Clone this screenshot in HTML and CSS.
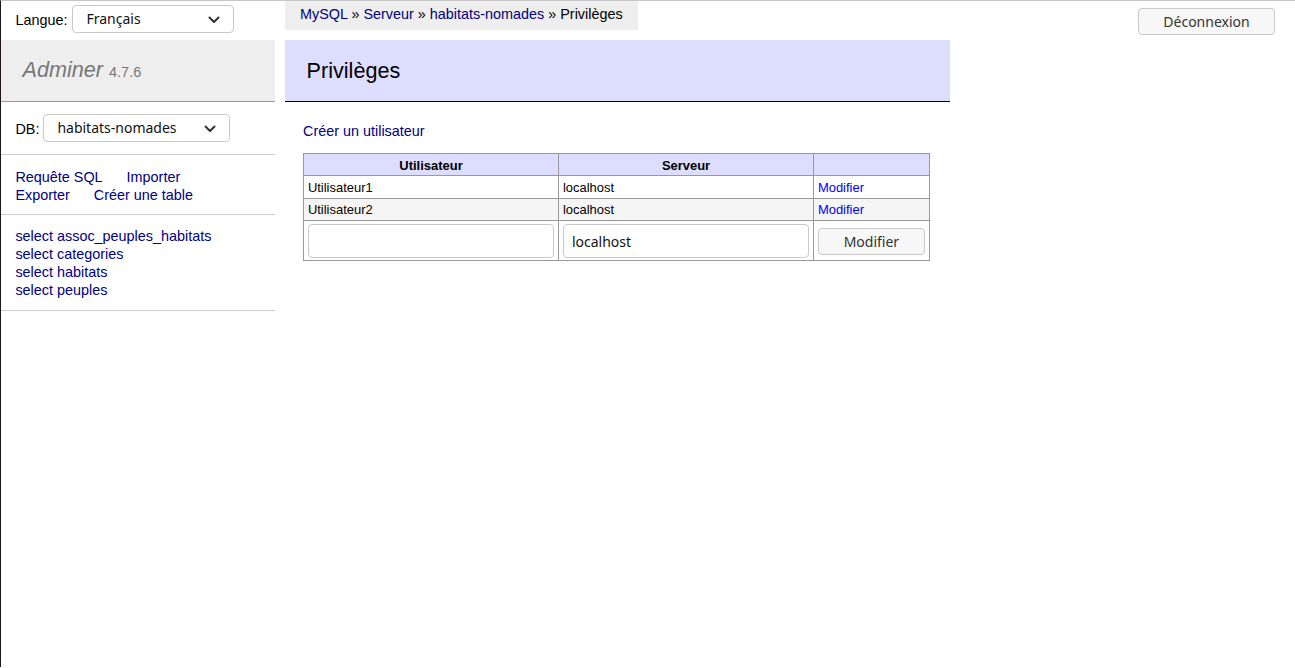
FILE: index.html
```html
<!DOCTYPE html>
<html lang="fr">
<head>
<meta charset="utf-8">
<title>Privilèges - Adminer</title>
<link rel="stylesheet" href="styles.css">
</head>
<body>
<div class="page">
  <div class="topbar">
    <div class="lang">
      <span class="label lang-label">Langue:</span>
      <span class="select lang-select">
        <span class="select-text">Français</span>
        <svg class="chev" width="12" height="8" viewBox="0 0 12 8"><path d="M1.5 1.5 L6 6 L10.5 1.5" fill="none" stroke="#333" stroke-width="2" stroke-linecap="round" stroke-linejoin="round"/></svg>
      </span>
    </div>
    <div class="breadcrumb">
      <a class="visited" href="#">MySQL</a> » <a class="visited" href="#">Serveur</a> » <a class="visited" href="#">habitats-nomades</a> » Privilèges
    </div>
    <button class="btn logout" type="button">Déconnexion</button>
  </div>
  <div class="main">
    <div class="menu">
      <h1><a class="h1link" href="#">Adminer</a> <span class="version">4.7.6</span></h1>
      <div class="dbrow">
        <span class="label">DB:</span>
        <span class="select db-select">
          <span class="select-text">habitats-nomades</span>
          <svg class="chev" width="12" height="8" viewBox="0 0 12 8"><path d="M1.5 1.5 L6 6 L10.5 1.5" fill="none" stroke="#333" stroke-width="2" stroke-linecap="round" stroke-linejoin="round"/></svg>
        </span>
      </div>
      <p class="links menu-links">
        <a class="visited" href="#">Requête SQL</a>
        <a class="visited" href="#">Importer</a>
        <a class="visited" href="#">Exporter</a>
        <a class="visited" href="#">Créer une table</a>
      </p>
      <ul class="tables">
        <li><a class="visited" href="#">select assoc_peuples_habitats</a></li>
        <li><a class="visited" href="#">select categories</a></li>
        <li><a class="visited" href="#">select habitats</a></li>
        <li><a class="visited" href="#">select peuples</a></li>
      </ul>
    </div>
    <div class="content">
      <h2>Privilèges</h2>
      <p class="newuser"><a class="visited" href="#">Créer un utilisateur</a></p>
      <table class="grid">
        <thead>
          <tr><th class="c1">Utilisateur</th><th class="c2">Serveur</th><th class="c3"></th></tr>
        </thead>
        <tbody>
          <tr><td>Utilisateur1</td><td>localhost</td><td><a class="fresh" href="#">Modifier</a></td></tr>
          <tr class="odd"><td>Utilisateur2</td><td>localhost</td><td><a class="fresh" href="#">Modifier</a></td></tr>
          <tr><td><input class="text" type="text" value=""></td><td><input class="text" type="text" value="localhost"></td><td><button class="btn modify" type="button">Modifier</button></td></tr>
        </tbody>
      </table>
    </div>
  </div>
</div>
</body>
</html>
```

FILE: styles.css
```css
html, body {
  margin: 0;
  padding: 0;
  background: #fff;
}
body {
  color: #000;
  font: 14.4px/1.25 "Liberation Sans", Arial, sans-serif;
}
a {
  text-decoration: none;
}
a.visited { color: #000080; }
a.fresh { color: #0000ff; }

.page {
  border-top: 1px solid #c6c6c6;
  border-left: 1px solid #1c1416;
  min-height: 667px;
  box-sizing: border-box;
}

.topbar {
  display: flex;
  align-items: flex-start;
  height: 39px;
}
.lang {
  width: 274px;
  box-sizing: border-box;
  padding: 4px 0 0 14.4px;
  display: flex;
  align-items: center;
}
.label {
  margin-right: 4px;
}
.lang-label {
  margin-right: 5px;
  padding-top: 1px;
}
.select {
  position: relative;
  display: inline-flex;
  align-items: center;
  box-sizing: border-box;
  height: 28px;
  border: 1px solid #c9c9c9;
  border-radius: 4px;
  background: #fff;
  font: 14px/1 "Noto Sans", "Open Sans", sans-serif;
  color: #111;
  padding-left: 13px;
}
.lang-select { width: 162px; }
.db-select { width: 187px; }
.chev {
  position: absolute;
  right: 13px;
  top: 10px;
}

.breadcrumb {
  margin-left: 10px;
  background: #eee;
  height: 28.8px;
  line-height: 27px;
  padding: 0 15px;
  white-space: nowrap;
}

.btn {
  box-sizing: border-box;
  border: 1px solid #c9c9c9;
  border-radius: 4px;
  background: #f7f7f7;
  color: #333;
  font: 14px/1 "Noto Sans", "Open Sans", sans-serif;
  padding: 0;
}
.logout {
  margin-left: auto;
  margin-right: 20px;
  margin-top: 7px;
  width: 137px;
  height: 27px;
}

.main {
  display: flex;
  align-items: flex-start;
}
.menu {
  width: 274px;
  flex: none;
}
h1 {
  font-size: 21.6px;
  line-height: 1.25;
  height: 27px;
  margin: 0;
  padding: 17px 21.6px;
  border-bottom: 1px solid #999;
  font-weight: normal;
  background: #eee;
}
.h1link {
  color: #777;
  font-style: italic;
}
.version {
  color: #777;
  font-size: 67%;
  line-height: 1;
}
.dbrow {
  display: flex;
  align-items: center;
  padding: 12px 14.4px 12px;
  border-bottom: 1px solid #ccc;
}
.dbrow .label {
  padding-top: 1px;
}
.menu-links {
  margin: 0;
  padding: 12.5px 14.4px 10.5px;
  border-bottom: 1px solid #ccc;
}
.menu-links a {
  white-space: nowrap;
  margin-right: 20px;
}
.tables {
  list-style: none;
  margin: 0;
  padding: 11.5px 14.4px 11.5px;
  border-bottom: 1px solid #ccc;
}

.content {
  padding: 0 20px 20px 28px;
}
h2 {
  font-size: 21.6px;
  line-height: 27px;
  margin: 0 0 20px -18px;
  padding: 17.4px 21.6px 16.6px;
  border-bottom: 1px solid #000;
  font-weight: normal;
  background: #ddf;
  color: #000;
}
.newuser {
  margin: 0;
}
.grid {
  margin: 13px 20px 0 0;
  border-collapse: collapse;
  font-size: 12.96px;
  line-height: 1.25;
}
.grid td, .grid th {
  border: 1px solid #999;
  padding: 3.2px 3.9px 2px;
  text-align: left;
}
.grid thead th {
  background: #ddf;
  text-align: center;
  padding: 3.6px 6.5px 1.6px;
}
.grid .c1 { width: 241px; }
.grid .c2 { width: 241px; }
.grid .c3 { width: 102px; }
.grid tr.odd { background: #f5f5f5; }
input.text {
  display: block;
  box-sizing: border-box;
  width: 246px;
  height: 34px;
  border: 1px solid #c9c9c9;
  border-radius: 4px;
  padding: 0 8px;
  font: 14px "Noto Sans", "Open Sans", sans-serif;
  color: #111;
  background: #fff;
}
.modify {
  display: block;
  width: 107px;
  height: 27px;
  padding-top: 1px;
}
```
